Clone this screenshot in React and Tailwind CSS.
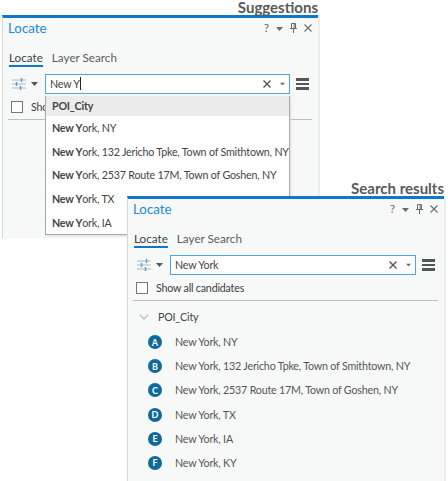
const font = "font-['Lato',sans-serif]";

const SlidersIcon = () => (
  <svg width="14" height="14" viewBox="0 0 14 14" className="shrink-0">
    <path d="M0 3h14M0 7h14M0 11h14" stroke="#a9b8c2" strokeWidth="1" />
    <path d="M9.5 1v4M4.5 5v4M8.5 9v4" stroke="#5aa0d2" strokeWidth="1.5" />
  </svg>
);

const Caret = ({ className }) => (
  <svg width="7" height="4" viewBox="0 0 7 4" className={className}>
    <path d="M0 0h7L3.5 4z" fill="currentColor" />
  </svg>
);

const Cross = ({ size = 8, color = "#555", width = 1.4 }) => (
  <svg width={size} height={size} viewBox="0 0 8 8" className="shrink-0">
    <path d="M.5.5l7 7M7.5.5l-7 7" stroke={color} strokeWidth={width} />
  </svg>
);

const WindowButtons = () => (
  <div className="flex items-center gap-[7px] text-[#6b6b6b]">
    <span className="text-[12px] leading-none">?</span>
    <Caret className="mt-[2px]" />
    <svg width="7" height="10" viewBox="0 0 7 10">
      <path d="M1.5.5h4v5h-4zM0 5.5h7M3.5 5.5V10M4.2 1v4" fill="none" stroke="#6b6b6b" strokeWidth="1" />
    </svg>
    <Cross size={8} color="#6b6b6b" width={1.1} />
  </div>
);

const Panel = ({ heading, text, cursor, width, height, children }) => (
  <>
    <div className="flex h-[15px] items-center justify-end">
      <span className="text-[15px] leading-none font-bold text-[#595959]">{heading}</span>
    </div>
    <div
      className="flex flex-col border-t-[3px] border-l border-t-[#0f78c8] border-l-[#d6d8d8] bg-[#f7f9f9] pl-[5px] pr-[6px] shadow-[2px_0_0_#ededed]"
      style={{ width, height }}
    >
      <div className="flex h-[20px] items-center justify-between">
        <span className="pt-[2px] text-[13.3px] leading-none text-[#2389d3]">Locate</span>
        <WindowButtons />
      </div>
      <div className="mt-[9px] flex h-[20px] gap-[9px] pl-[1px] text-[11.7px] text-[#5c5c5c]">
        <span className="h-[20px] border-b-2 border-[#0f78c8] leading-[21px] text-[#404040]">Locate</span>
        <span className="leading-[21px]">Layer Search</span>
      </div>
      <div className="mt-[7px] flex h-[20px] items-center">
        <div className="flex w-[37px] items-center gap-[5px] pl-[4px] text-[#555]">
          <SlidersIcon />
          <Caret />
        </div>
        <div className="flex h-[20px] flex-1 items-center border border-[#4ea6dc] bg-white pl-[4px] pr-[3px] text-[10.7px] tracking-[-0.2px] text-[#444]">
          <span className="flex-1 leading-none">
            {text}
            {cursor && <span className="border-r border-[#222]" />}
          </span>
          <Cross />
          <Caret className="ml-[8px] scale-75 text-[#666]" />
        </div>
        <div className="ml-[6px] flex w-[13px] flex-col gap-[2px]">
          <div className="h-[2.5px] bg-[#555]" />
          <div className="h-[2.5px] bg-[#555]" />
          <div className="h-[2.5px] bg-[#555]" />
        </div>
        <div className="w-[3px]" />
      </div>
      <div className="mt-[7px] flex h-[12px] items-center gap-[8px] pl-[3px]">
        <div className="h-[12px] w-[12px] shrink-0 border border-[#777] bg-white" />
        <span className="text-[10.7px] leading-none tracking-[-0.2px] text-[#404040]">Show all candidates</span>
      </div>
      <div className="mt-[6px] h-px bg-[#bdbdbd]" />
      {children}
    </div>
  </>
);

const suggestions = [
  ", NY",
  ", 132 Jericho Tpke, Town of Smithtown, NY",
  ", 2537 Route 17M, Town of Goshen, NY",
  ", TX",
  ", IA",
];

const results = [
  ["A", "New York, NY"],
  ["B", "New York, 132 Jericho Tpke, Town of Smithtown, NY"],
  ["C", "New York, 2537 Route 17M, Town of Goshen, NY"],
  ["D", "New York, TX"],
  ["E", "New York, IA"],
  ["F", "New York, KY"],
];

export default function App() {
  return (
    <div className={`relative h-[481px] w-[448px] overflow-hidden bg-white ${font}`}>
      {/* first window, with the open suggestion list */}
      <div className="absolute top-0 left-[2px]">
        <Panel heading="Suggestions" text="New Y" cursor width={316} height={223} />
        <div className="absolute top-[96px] left-[43px] w-[245px] overflow-hidden border-r border-b border-l border-[#a9a9a9] bg-white text-[10.7px] tracking-[-0.2px] text-[#444] shadow-[1px_1px_2px_#ddd]">
          <div className="flex h-[20px] items-center bg-[#ececec] pl-[6px] font-bold text-[#444]">POI_City</div>
          {suggestions.map((s) => (
            <div key={s} className="flex h-[23.7px] items-center whitespace-nowrap pl-[6px]">
              <span>
                <b>New Y</b>ork{s}
              </span>
            </div>
          ))}
        </div>
      </div>

      {/* second window, with the results */}
      <div className="absolute top-[181px] left-[127px]">
        <Panel heading="Search results" text="New York" width={317} height={285}>
          <div className="mt-[8px] flex h-[16px] items-center gap-[9px] pl-[6px] text-[10.7px] tracking-[-0.2px] text-[#444]">
            <svg width="10" height="6" viewBox="0 0 10 6">
              <path d="M1 1l4 4 4-4" fill="none" stroke="#bbb" strokeWidth="1.2" />
            </svg>
            <span>POI_City</span>
          </div>
          {results.map(([letter, label], i) => (
            <div key={letter} className={`flex h-[14px] items-center gap-[13px] pl-[15px] text-[10.7px] tracking-[-0.2px] whitespace-nowrap text-[#555] ${i == 0 ? "mt-[10px]" : "mt-[10.2px]"}`}>
              <span className="flex h-[14px] w-[14px] shrink-0 items-center justify-center rounded-full bg-[#0f6a99] text-[9px] leading-none font-bold tracking-normal text-white">
                {letter}
              </span>
              <span>{label}</span>
            </div>
          ))}
        </Panel>
      </div>
    </div>
  );
}
